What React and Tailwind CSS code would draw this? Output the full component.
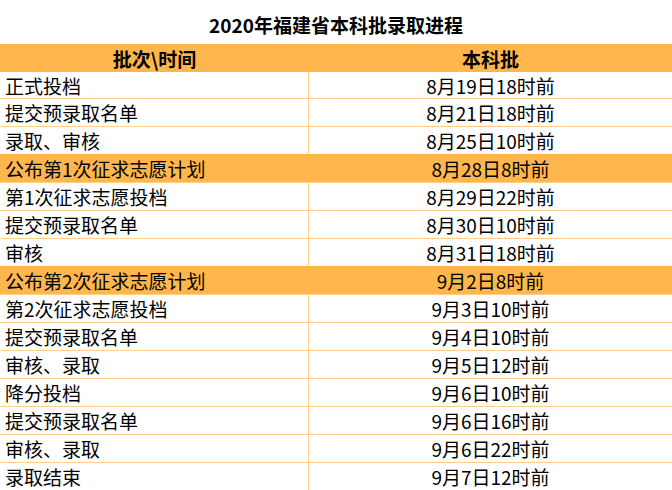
import React from 'react'

const rows = [
    { name: "正式投档", time: "8月19日18时前" },
    { name: "提交预录取名单", time: "8月21日18时前" },
    { name: "录取、审核", time: "8月25日10时前" },
    { name: "公布第1次征求志愿计划", time: "8月28日8时前", hl: true },
    { name: "第1次征求志愿投档", time: "8月29日22时前" },
    { name: "提交预录取名单", time: "8月30日10时前" },
    { name: "审核", time: "8月31日18时前" },
    { name: "公布第2次征求志愿计划", time: "9月2日8时前", hl: true },
    { name: "第2次征求志愿投档", time: "9月3日10时前" },
    { name: "提交预录取名单", time: "9月4日10时前" },
    { name: "审核、录取", time: "9月5日12时前" },
    { name: "降分投档", time: "9月6日10时前" },
    { name: "提交预录取名单", time: "9月6日16时前" },
    { name: "审核、录取", time: "9月6日22时前" },
    { name: "录取结束", time: "9月7日12时前" },
]

const App = () => {
  return (
    <div className="w-[672px] h-[490px] overflow-hidden bg-white text-black font-['Noto_Sans_CJK_SC','Noto_Sans',sans-serif]">
        {/* title */}
        <div className="h-[44px] flex items-center justify-center pt-1 text-[19px] font-bold leading-none">
            2020年福建省本科批录取进程
        </div>

        {/* header */}
        <div className="grid grid-cols-[309px_1fr] h-[28px] bg-[#FFB74D] text-[19px] font-bold leading-none">
            <div className="flex items-center justify-center">批次\时间</div>
            <div className="flex items-center justify-center">本科批</div>
        </div>

        {/* rows */}
        {rows.map((r, i) => (
            <div key={i}
                className={`grid grid-cols-[309px_1fr] text-[19px] leading-none ${i === 0 ? "h-[26px]" : "h-[28px] border-t"} ${r.hl ? "bg-[#FFB74D] border-[#FFB74D]" : "border-[#FFD08A]"}`}>
                <div className={`flex items-center pl-[5px] border-r ${r.hl ? "border-[#FFB74D]" : "border-[#FFD08A]"}`}>{r.name}</div>
                <div className="flex items-center justify-center">{r.time}</div>
            </div>
        ))}
    </div>
  )
}

export default App
